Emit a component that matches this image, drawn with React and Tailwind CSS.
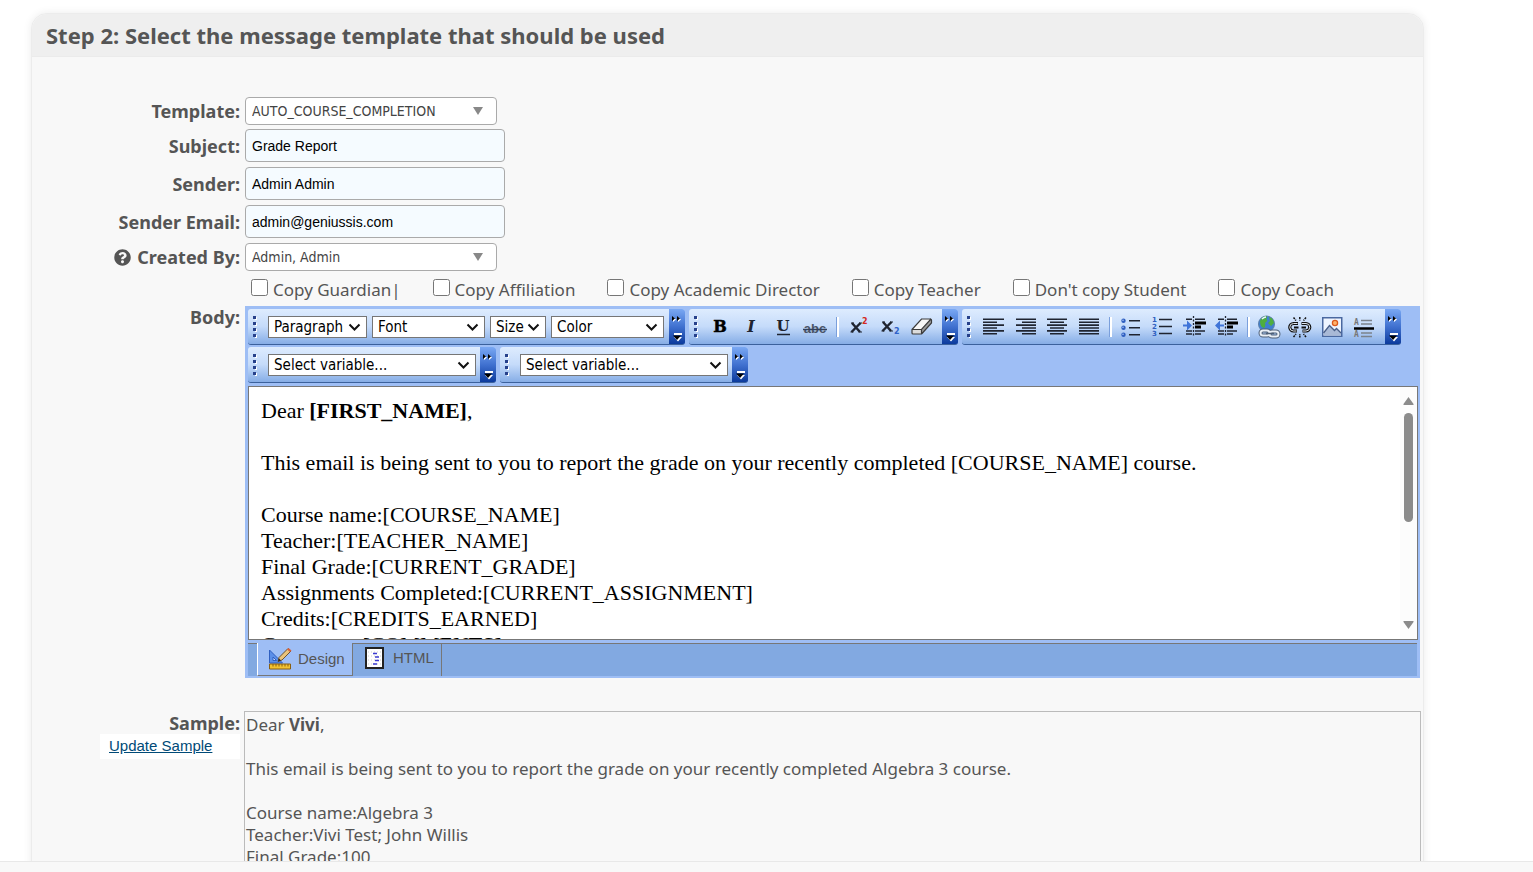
import React, { useState } from 'react'
import { FaQuestionCircle } from 'react-icons/fa'

const COPY_OPTIONS = [
  { id: 'guardian', label: 'Copy Guardian|' },
  { id: 'affiliation', label: 'Copy Affiliation' },
  { id: 'director', label: 'Copy Academic Director' },
  { id: 'teacher', label: 'Copy Teacher' },
  { id: 'student', label: "Don't copy Student" },
  { id: 'coach', label: 'Copy Coach' },
]

const INK = '#1f2430'

// Every toolbar glyph shares a 32x36 box, the size of its button
const Glyph = ({ children }) => (
  <svg width="32" height="36" viewBox="0 0 32 36" fill="none" aria-hidden="true">
    {children}
  </svg>
)

const Lines = ({ rows }) => (
  <g stroke={INK} strokeWidth="1.6">
    {rows.map(([x1, x2, y]) => <path key={`${x1}-${y}`} d={`M${x1} ${y}H${x2}`} />)}
  </g>
)

const INDENT_ROWS = [[7, 13, 10.3], [16, 26, 10.3], [7, 13, 22], [7, 13, 25], [16, 26, 22], [16, 22, 25]]

const ICONS = {
  bold: <text x="16" y="23" textAnchor="middle" fontFamily="DejaVu Serif" fontWeight="700" fontSize="16" fill="#000" stroke="#000" strokeWidth=".5">B</text>,
  italic: <text x="15" y="23" textAnchor="middle" fontFamily="DejaVu Serif" fontWeight="700" fontStyle="italic" fontSize="16" fill={INK}>I</text>,
  underline: (
    <>
      <text x="15" y="22" textAnchor="middle" fontFamily="DejaVu Serif" fontWeight="700" fontSize="15" fill={INK}>U</text>
      <path d="M9 25.5h13" stroke={INK} strokeWidth="1.5" />
    </>
  ),
  strike: (
    <>
      <text x="15" y="24" textAnchor="middle" fontFamily="Liberation Sans" fontWeight="700" fontSize="13" fill="#4a5568">abc</text>
      <path d="M3 20.5h24" stroke="#33415c" strokeWidth="1.5" />
    </>
  ),
  sup: (
    <>
      <path d="M10 14l8 9M18.500 14l-9 9" stroke={INK} strokeWidth="2.400" />
      <path d="M9 14h3M17 14h3M8.500 23h3M16.500 23h3.500" stroke={INK} strokeWidth="1.200" />
      <text x="20" y="15" fontFamily="DejaVu Sans" fontWeight="700" fontSize="8" fill="#d42a22">2</text>
    </>
  ),
  sub: (
    <>
      <path d="M9 13l8 9M17.500 13l-9 9" stroke={INK} strokeWidth="2.400" />
      <path d="M8 13h3M16 13h3M7.500 22h3M15.500 22h3.500" stroke={INK} strokeWidth="1.200" />
      <text x="20" y="25" fontFamily="DejaVu Sans" fontWeight="700" fontSize="8" fill="#2f62c8">2</text>
    </>
  ),
  eraser: (
    <>
      <path d="M6 20.500L15.500 10h9.500L15.500 20.500z" fill="#f7f7f7" />
      <path d="M15.500 20.500L25 10v4.500L15.500 25z" fill="#9a9a9a" />
      <path d="M6 20.500h9.500V25H6z" fill="#dcdcdc" />
      <path d="M6 20.500L15.500 10h9q1 0 1 1v3L16 24.500q-.5.500-1 .5H7q-1 0-1-1zM6 20.500h9.500L25 10M15.500 20.500V25" stroke="#3c3c3c" strokeWidth="1.200" />
    </>
  ),
  left: <Lines rows={[[6, 27, 10.3], [6, 20, 13.2], [6, 27, 16.1], [6, 20, 19], [6, 27, 21.9], [6, 20, 24.8]]} />,
  right: <Lines rows={[[7, 27, 10.3], [13, 27, 13.2], [7, 27, 16.1], [13, 27, 19], [7, 27, 21.9], [13, 27, 24.8]]} />,
  center: <Lines rows={[[6, 26, 10.3], [9, 23, 13.2], [6, 26, 16.1], [9, 23, 19], [6, 26, 21.9], [9, 23, 24.8]]} />,
  justify: <Lines rows={[[6, 26, 10.3], [6, 26, 13.2], [6, 26, 16.1], [6, 26, 19], [6, 26, 21.9], [6, 26, 24.8]]} />,
  bullets: (
    <>
      {[11.7, 18.7, 25.7].map(y => (
        <g key={y}>
          <circle cx="8.500" cy={y} r="2.200" fill="#2f5fc0" />
          <circle cx="8" cy={y - 0.5} r=".8" fill="#a9c4f5" />
        </g>
      ))}
      <Lines rows={[[14, 25, 11.7], [14, 25, 18.7], [14, 25, 25.7]]} />
    </>
  ),
  numbers: (
    <>
      {[1, 2, 3].map(n => (
        <text key={n} x="5" y={6 + n * 7} fontFamily="DejaVu Sans" fontWeight="700" fontSize="7" fill="#2f5fc0">{n}</text>
      ))}
      <Lines rows={[[12, 25, 10.5], [12, 25, 17.5], [12, 25, 24.5]]} />
    </>
  ),
  indent: (
    <>
      <Lines rows={INDENT_ROWS} />
      <path d="M16 14h11M16 18h6" stroke="#000" strokeWidth="3" />
      <path d="M14.500 7v21" stroke={INK} strokeWidth="1.300" strokeDasharray="2 1.5" />
      <path d="M4 15.500h4v-4l5 5-5 5v-4H4z" fill="#3f74d8" />
    </>
  ),
  outdent: (
    <>
      <Lines rows={INDENT_ROWS} />
      <path d="M16 14h11M16 18h6" stroke="#000" strokeWidth="3" />
      <path d="M14.500 7v21" stroke={INK} strokeWidth="1.300" strokeDasharray="2 1.5" />
      <path d="M13 15.500H9v-4l-5 5 5 5v-4h4z" fill="#3f74d8" />
    </>
  ),
  link: (
    <>
      <circle cx="13.500" cy="15" r="8" fill="#3f7fd0" stroke="#5d7fa8" />
      <path d="M7 12q2-5 7-5-1 3 0 4t-2 3q1 3-1 5-4-1-4-7zM16 8q4 1 5 6l-3 3-3-3 2-2z" fill="#4fae3f" />
      <path d="M9 10q2-2 4-2" stroke="#e6f4ff" strokeWidth="1.500" />
      <g stroke="#4f6078" strokeWidth="4">
        <rect x="7.500" y="21.500" width="9" height="5" rx="2.500" />
        <rect x="16.500" y="22.500" width="9" height="5" rx="2.500" />
      </g>
      <g stroke="#e9eef5" strokeWidth="2">
        <rect x="7.500" y="21.500" width="9" height="5" rx="2.500" />
        <rect x="16.500" y="22.500" width="9" height="5" rx="2.500" />
      </g>
      <path d="M13 24.500h8" stroke="#4f6078" strokeWidth="1.500" />
    </>
  ),
  unlink: (
    <>
      <path d="M13 14.500H8.500a3.700 3.700 0 000 7.500H12M16.500 14.500h4.500a3.700 3.700 0 010 7.500h-3.500" stroke="#111" strokeWidth="3.200" />
      <path d="M12.500 14.500h-4a3.700 3.700 0 000 7.500h3M17 14.500h4a3.700 3.700 0 010 7.500h-3" stroke="#dfe6f0" strokeWidth="1" />
      <path d="M9 18.500h4.500M16.500 18.500H21" stroke="#111" strokeWidth="1.800" />
      <path d="M8.500 8.500l2.500 3M14.800 8v3.500M21 8.500l-2.500 3M8.500 28l2.500-3M14.800 28.500V25M21 28l-2.500-3" stroke="#111" strokeWidth="1.500" strokeDasharray="2 .8" />
    </>
  ),
  image: (
    <>
      <rect x="5.750" y="8.750" width="19" height="18.500" fill="#eef4ff" stroke="#4a68a0" strokeWidth="1.500" />
      <path d="M6.500 26.500v-3l6-7 5 5 2-2 4.500 4.500v2.500z" fill="#a9b9d6" />
      <path d="M6.500 24l6-7.500 5 5 2-2 4.500 4.500" stroke="#4a5f88" strokeWidth="1.300" />
      <circle cx="18" cy="14" r="2.600" fill="#ffb26b" stroke="#dc5a1e" strokeWidth="1.300" />
    </>
  ),
  rule: (
    <>
      <text x="5" y="16" fontFamily="DejaVu Sans Mono" fontWeight="700" fontSize="8" fill="#777">A</text>
      <text x="5" y="28" fontFamily="DejaVu Sans Mono" fontWeight="700" fontSize="8" fill="#777">A</text>
      <path d="M12 11.500h11M12 15h11M12 24h11M12 27.500h11" stroke="#7b828c" strokeWidth="1.400" />
      <path d="M5 19.500h20" stroke="#000" strokeWidth="2.400" />
    </>
  ),
}

const ToolButton = ({ name, label }) => (
  <button type="button" aria-label={label} className="w-8 h-9">
    <Glyph>{ICONS[name]}</Glyph>
  </button>
)

const Separator = () => (
  <div className="w-2.5 flex justify-center">
    <div className="w-[3px] h-5 border-l border-[#7a9fdc] bg-white" />
  </div>
)

const Toolbar = ({ label, children }) => (
  <div role="toolbar" aria-label={label} className="flex h-9 rounded-[3px] overflow-hidden border-b border-[#3b619c] bg-linear-to-b from-[#deecfe] via-[#c5dbfa] to-[#86ade6]">
    <div className="w-[15px] flex items-center">
      <svg width="15" height="24" viewBox="0 0 15 24" aria-hidden="true">
        {[1, 7, 13, 19].map(y => (
          <g key={y}>
            <rect x="7" y={y + 1} width="2" height="3" fill="#fff" />
            <rect x="5" y={y} width="3" height="3" fill="#27418b" />
          </g>
        ))}
      </svg>
    </div>
    <div className="flex items-center pr-1">{children}</div>
    <button type="button" aria-label={`${label} options`} className="w-4 h-9 bg-linear-to-b from-[#7aa8f3] via-[#3f70cf] to-[#08379a]">
      <svg width="16" height="36" viewBox="0 0 16 36" aria-hidden="true">
        <path d="M4 8v5l3-2.500zM9 8v5l3-2.500z" fill="#fff" />
        <path d="M3 7v5l3-2.500zM8 7v5l3-2.500z" fill="#000" />
        <path d="M5 24h8v2H5zM5 28h8l-4 4.500z" fill="#fff" />
        <path d="M4 26.500h8L8 31z" fill="#000" />
      </svg>
    </button>
  </div>
)

const ToolSelect = ({ label, className }) => (
  <div className={`relative ${className}`}>
    <select aria-label={label} className='appearance-none block w-full h-[22px] pl-[5px] border border-[#767676] bg-white text-black text-[15px] leading-5 font-["DejaVu_Sans_Condensed",sans-serif]'>
      <option>{label}</option>
    </select>
    <svg className="absolute right-1.5 top-[7px] pointer-events-none" width="13" height="9" viewBox="0 0 13 9" fill="none" aria-hidden="true">
      <path d="M1.500 1.500l5 5 5-5" stroke="#111" strokeWidth="2" />
    </svg>
  </div>
)

const ComboBox = ({ id, value }) => (
  <div className="relative w-[252px]">
    <select id={id} className='appearance-none block w-full h-7 pl-1.5 border border-[#aaa] rounded bg-white text-[14px] text-[#444] font-["DejaVu_Sans_Condensed",sans-serif]'>
      <option>{value}</option>
    </select>
    <svg className="absolute right-[14px] top-[10px] pointer-events-none" width="10" height="8" viewBox="0 0 10 8" aria-hidden="true">
      <path d="M0 0h10L5 8z" fill="#888" />
    </svg>
  </div>
)

const Row = ({ id, label, help, children }) => (
  <>
    <label htmlFor={id} className="flex items-center justify-end gap-1.5 text-[18px] font-bold">
      {help && <FaQuestionCircle size={17} />}
      {label}
    </label>
    <div>{children}</div>
  </>
)

const inputClass = 'block w-[260px] h-[33px] mb-px px-1.5 border border-[#aaa] rounded bg-[#f5fbff] text-black text-[14px] font-["Liberation_Sans",sans-serif]'

export default function App() {
  const [subject, setSubject] = useState('Grade Report')
  const [sender, setSender] = useState('Admin Admin')
  const [email, setEmail] = useState('admin@geniussis.com')

  return (
    <div className='h-screen flex flex-col bg-white text-[17px] leading-[22px] text-[#555] font-["Noto_Sans",sans-serif]'>
      <main className="flex-1 min-h-0 overflow-hidden pt-[13px] pl-[31px] pr-[109px]">
        <section className="min-h-full rounded-t-2xl bg-[#f8f8f8] border border-[#ececec] shadow-[0_0_8px_rgba(0,0,0,0.08)]">
          <h2 className="h-[43px] px-3.5 flex items-center rounded-t-2xl bg-[#efefef] border-b border-[#ebebeb] text-[22px] font-bold">
            Step 2: Select the message template that should be used
          </h2>

          <div className="pt-10 grid grid-cols-[208px_1fr] gap-x-[5px] gap-y-1 pr-0.5">
            <Row id="template" label="Template:"><ComboBox id="template" value="AUTO_COURSE_COMPLETION" /></Row>
            <Row id="subject" label="Subject:">
              <input id="subject" className={inputClass} value={subject} onChange={e => setSubject(e.target.value)} />
            </Row>
            <Row id="sender" label="Sender:">
              <input id="sender" className={inputClass} value={sender} onChange={e => setSender(e.target.value)} />
            </Row>
            <Row id="email" label="Sender Email:">
              <input id="email" type="email" className={inputClass} value={email} onChange={e => setEmail(e.target.value)} />
            </Row>
            <Row id="created" label="Created By:" help><ComboBox id="created" value="Admin, Admin" /></Row>

            {/* Copy recipients */}
            <div className="col-start-2 flex gap-8 pl-1.5 pt-1 pb-px">
              {COPY_OPTIONS.map(o => (
                <label key={o.id} className="flex gap-[5px] whitespace-nowrap">
                  <input type="checkbox" name={o.id} className="w-[17px] h-[17px]" />
                  {o.label}
                </label>
              ))}
            </div>

            {/* Body editor */}
            <div className="text-right text-[18px] font-bold">Body:</div>
            <div className="bg-[#9ebef5] p-[3px] pr-0.5 pb-0.5 mr-px">
              <div className="flex flex-wrap gap-x-1 gap-y-0.5">
                <Toolbar label="Styles">
                  <div className="flex gap-[5px] pl-[5px] pr-px">
                    <ToolSelect label="Paragraph" className="w-[99px]" />
                    <ToolSelect label="Font" className="w-[113px]" />
                    <ToolSelect label="Size" className="w-14" />
                    <ToolSelect label="Color" className="w-[113px]" />
                  </div>
                </Toolbar>
                <Toolbar label="Formatting">
                  <ToolButton name="bold" label="Bold" />
                  <ToolButton name="italic" label="Italic" />
                  <ToolButton name="underline" label="Underline" />
                  <ToolButton name="strike" label="Strikethrough" />
                  <Separator />
                  <ToolButton name="sup" label="Superscript" />
                  <ToolButton name="sub" label="Subscript" />
                  <ToolButton name="eraser" label="Remove formatting" />
                </Toolbar>
                <Toolbar label="Paragraphs">
                  <ToolButton name="left" label="Align left" />
                  <ToolButton name="right" label="Align right" />
                  <ToolButton name="center" label="Center" />
                  <ToolButton name="justify" label="Justify" />
                  <Separator />
                  <ToolButton name="bullets" label="Bulleted list" />
                  <ToolButton name="numbers" label="Numbered list" />
                  <ToolButton name="indent" label="Indent" />
                  <ToolButton name="outdent" label="Outdent" />
                  <Separator />
                  <ToolButton name="link" label="Insert link" />
                  <ToolButton name="unlink" label="Remove link" />
                  <ToolButton name="image" label="Insert image" />
                  <ToolButton name="rule" label="Insert rule" />
                </Toolbar>
                <div className="flex gap-1">
                  <Toolbar label="Variables">
                    <div className="pl-[5px]"><ToolSelect label="Select variable..." className="w-[208px]" /></div>
                  </Toolbar>
                  <Toolbar label="More variables">
                    <div className="pl-[5px]"><ToolSelect label="Select variable..." className="w-[208px]" /></div>
                  </Toolbar>
                </div>
              </div>

              <div className="mt-[3px] h-[254px] flex border border-[#777] bg-white">
                <div className='flex-1 h-full overflow-hidden pl-3 pt-[11px] text-black text-[22px] leading-[26px] font-["Liberation_Serif",serif]'>
                  <p>Dear <b>[FIRST_NAME]</b>,</p>
                  <br />
                  <p>This email is being sent to you to report the grade on your recently completed [COURSE_NAME] course.</p>
                  <br />
                  <p>Course name:[COURSE_NAME]</p>
                  <p>Teacher:[TEACHER_NAME]</p>
                  <p>Final Grade:[CURRENT_GRADE]</p>
                  <p>Assignments Completed:[CURRENT_ASSIGNMENT]</p>
                  <p>Credits:[CREDITS_EARNED]</p>
                  <p>Comments:[COMMENTS]</p>
                </div>
                {/* scroll track */}
                <div className="w-[17px] py-2.5 flex flex-col items-center bg-[#fcfcfc]">
                  <svg width="11" height="8" viewBox="0 0 11 8" aria-hidden="true"><path d="M5.500 0l5 7q.5 1-.5 1H1Q0 8 .5 7z" fill="#8b8b8b" /></svg>
                  <div className="mt-2 w-[9px] h-[109px] rounded-full bg-[#8b8b8b]" />
                  <svg className="mt-auto" width="11" height="8" viewBox="0 0 11 8" aria-hidden="true"><path d="M5.500 8l5-7q.5-1-.5-1H1Q0 0 .5 1z" fill="#8b8b8b" /></svg>
                </div>
              </div>

              <div className='mt-[3px] mr-px h-[33px] flex pl-[9px] border-t border-[#777] bg-[#82a9e1] text-[15px] font-["Liberation_Sans",sans-serif]'>
                <button type="button" className="-mt-px w-24 pl-2.5 pb-px flex items-center gap-1.5 border-l border-l-white border-r border-b border-r-[#777] border-b-[#777] bg-[#9ebef5]">
                  <svg width="24" height="24" viewBox="0 0 24 24" fill="none" aria-hidden="true">
                    <path d="M1.500 3l13 13h-13z" fill="#5b8fe8" stroke="#2f5fc0" />
                    <path d="M5 10l3.500 3.500H5z" fill="#c9dcff" stroke="#2f5fc0" />
                    <path d="M10 14.500l1-4L20 1.500l3 2.500-9 9z" fill="#e9c37a" stroke="#6b5232" />
                    <path d="M19 2.500L20.500 1l3 2.500L22 5z" fill="#d8603a" />
                    <path d="M10 14.500l1-3 2 2z" fill="#222" />
                    <path d="M1.500 17h21v5h-21z" fill="#f2c230" stroke="#8a5f10" />
                    <path d="M5 17v2.500M8 17v2.500M11 17v2.500M14 17v2.500M17 17v2.500M20 17v2.500" stroke="#8a5f10" />
                  </svg>
                  Design
                </button>
                <button type="button" className="w-[89px] pl-3 pb-1 flex items-center gap-[9px] border-r border-[#777]">
                  <svg width="19" height="22" viewBox="0 0 19 22" fill="none" aria-hidden="true">
                    <path d="M1 1h17v20H1z" fill="#fff" stroke="#222" strokeWidth="2" />
                    <path d="M3 5h13M3 9h13M3 13h13M3 17h13" stroke="#ccc" strokeDasharray="1 2" />
                    <path d="M8 6.500h4M10 10h4M10 13.500h4M8 17h4" stroke="#3a3ad0" strokeWidth="1.600" />
                  </svg>
                  HTML
                </button>
              </div>
            </div>

            {/* Sample preview */}
            <div className="mt-[29px] pt-px">
              <div className="text-right text-[18px] font-bold">Sample:</div>
              <div className="ml-[68px] h-[25px] pl-[9px] bg-white">
                <a href="#sample" className='text-[15px] text-[#004a77] underline font-["Liberation_Sans",sans-serif]'>Update Sample</a>
              </div>
            </div>
            <div className="mt-[29px] -ml-px h-[320px] pt-0.5 pl-px border border-[#bbb]">
              <p>Dear <b>Vivi</b>,</p>
              <br />
              <p>This email is being sent to you to report the grade on your recently completed Algebra 3 course.</p>
              <br />
              <p>Course name:Algebra 3</p>
              <p>Teacher:Vivi Test; John Willis</p>
              <p>Final Grade:100</p>
            </div>
          </div>
        </section>
      </main>
      <footer className="h-[11px] shrink-0 bg-[#f8f8f8] border-t border-[#e8e8e8]" />
    </div>
  )
}
